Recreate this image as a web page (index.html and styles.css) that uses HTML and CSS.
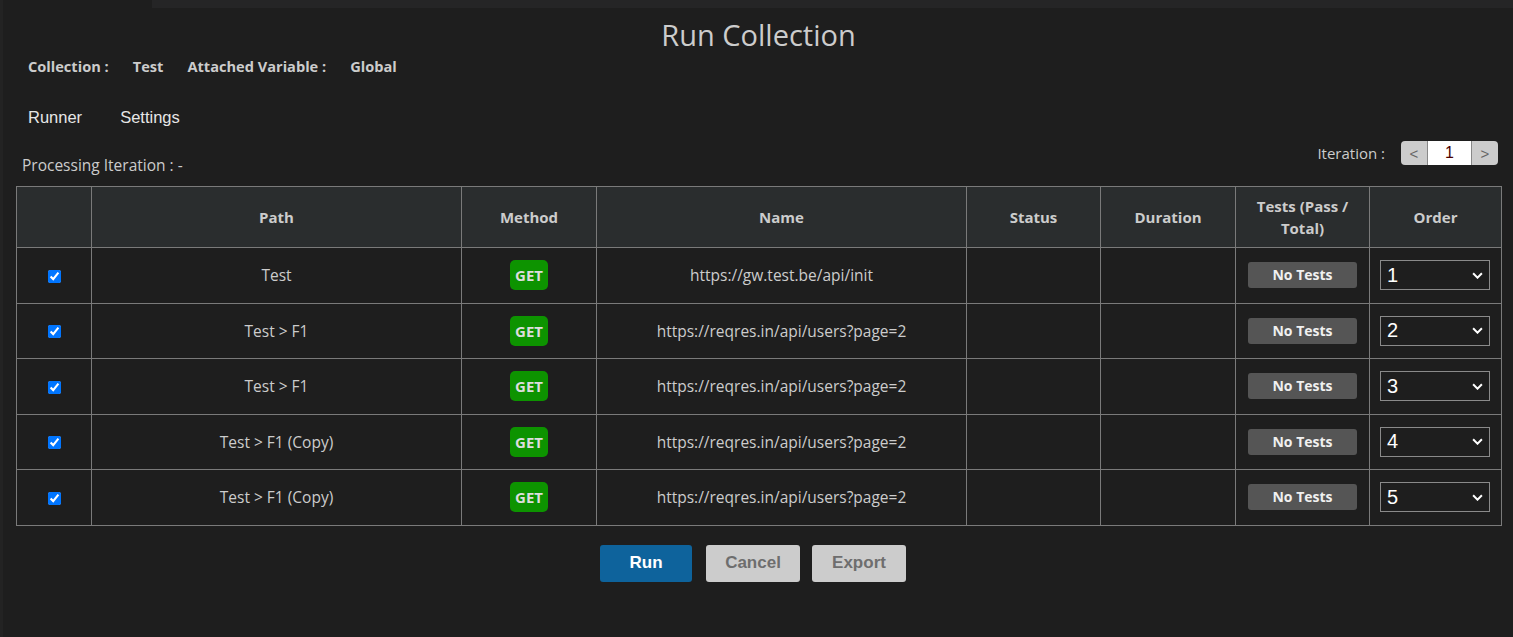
FILE: index.html
```html
<!DOCTYPE html>
<html>
<head>
<meta charset="utf-8">
<link rel="stylesheet" href="styles.css">
</head>
<body>
<div class="topbar"></div>
<div class="edge"></div>
<main class="page">
  <h1 class="title">Run Collection</h1>
  <div class="info">
    <span class="info-label">Collection :</span>
    <span class="info-value">Test</span>
    <span class="info-label">Attached Variable :</span>
    <span class="info-value">Global</span>
  </div>
  <nav class="tabs">
    <span class="tab">Runner</span>
    <span class="tab">Settings</span>
  </nav>
  <div class="status-row">
    <div class="processing">Processing Iteration : -</div>
    <div class="iteration">
      <span class="iteration-label">Iteration :</span>
      <div class="stepper">
        <button class="step">&lt;</button>
        <span class="step-value">1</span>
        <button class="step">&gt;</button>
      </div>
    </div>
  </div>
  <table class="runs">
    <colgroup>
      <col class="c-check"><col class="c-path"><col class="c-method"><col class="c-name">
      <col class="c-status"><col class="c-duration"><col class="c-tests"><col class="c-order">
    </colgroup>
    <thead>
      <tr>
        <th></th><th>Path</th><th>Method</th><th>Name</th><th>Status</th><th>Duration</th><th>Tests (Pass /<br>Total)</th><th>Order</th>
      </tr>
    </thead>
    <tbody>
      <tr>
        <td><input type="checkbox" checked></td><td>Test</td><td><span class="get">GET</span></td><td>https://gw.test.be/api/init</td><td></td><td></td><td><span class="notests">No Tests</span></td>
        <td><div class="order"><span>1</span><svg viewBox="0 0 10 6" width="11" height="7"><path d="M1 1l4 4 4-4" fill="none" stroke="#fff" stroke-width="1.8"/></svg></div></td>
      </tr>
      <tr>
        <td><input type="checkbox" checked></td><td>Test &gt; F1</td><td><span class="get">GET</span></td><td>https://reqres.in/api/users?page=2</td><td></td><td></td><td><span class="notests">No Tests</span></td>
        <td><div class="order"><span>2</span><svg viewBox="0 0 10 6" width="11" height="7"><path d="M1 1l4 4 4-4" fill="none" stroke="#fff" stroke-width="1.8"/></svg></div></td>
      </tr>
      <tr>
        <td><input type="checkbox" checked></td><td>Test &gt; F1</td><td><span class="get">GET</span></td><td>https://reqres.in/api/users?page=2</td><td></td><td></td><td><span class="notests">No Tests</span></td>
        <td><div class="order"><span>3</span><svg viewBox="0 0 10 6" width="11" height="7"><path d="M1 1l4 4 4-4" fill="none" stroke="#fff" stroke-width="1.8"/></svg></div></td>
      </tr>
      <tr>
        <td><input type="checkbox" checked></td><td>Test &gt; F1 (Copy)</td><td><span class="get">GET</span></td><td>https://reqres.in/api/users?page=2</td><td></td><td></td><td><span class="notests">No Tests</span></td>
        <td><div class="order"><span>4</span><svg viewBox="0 0 10 6" width="11" height="7"><path d="M1 1l4 4 4-4" fill="none" stroke="#fff" stroke-width="1.8"/></svg></div></td>
      </tr>
      <tr>
        <td><input type="checkbox" checked></td><td>Test &gt; F1 (Copy)</td><td><span class="get">GET</span></td><td>https://reqres.in/api/users?page=2</td><td></td><td></td><td><span class="notests">No Tests</span></td>
        <td><div class="order"><span>5</span><svg viewBox="0 0 10 6" width="11" height="7"><path d="M1 1l4 4 4-4" fill="none" stroke="#fff" stroke-width="1.8"/></svg></div></td>
      </tr>
    </tbody>
  </table>
  <div class="actions">
    <button class="btn btn-run">Run</button>
    <button class="btn btn-grey">Cancel</button>
    <button class="btn btn-grey btn-export">Export</button>
  </div>
</main>
</body>
</html>
```
FILE: styles.css
```css
html, body {
  margin: 0;
  padding: 0;
  background: #1e1e1e;
  height: 100%;
}
body {
  font-family: "Open Sans", "Noto Sans", sans-serif;
  color: #cccccc;
  position: relative;
  overflow: hidden;
}
.topbar {
  height: 8px;
  margin-left: 152px;
  background: #252526;
}
.edge {
  position: absolute;
  left: 0;
  top: 0;
  bottom: 0;
  width: 3px;
  background: #232323;
}
.page {
  padding: 0 12px 0 16px;
}
.title {
  margin: 8px 0 0;
  font-size: 29px;
  font-weight: 400;
  line-height: 38px;
  text-align: center;
  color: #cccccc;
}
.info {
  display: flex;
  gap: 24px;
  padding-left: 12px;
  margin-top: 1px;
  font-size: 14.6px;
  font-weight: 700;
  line-height: 22px;
  color: #cccccc;
}
.tabs {
  display: flex;
  gap: 38px;
  padding-left: 12px;
  margin-top: 29px;
  font-family: "Liberation Sans", Arial, sans-serif;
  font-size: 16.5px;
  line-height: 22px;
  color: #e6e6e6;
}
.status-row {
  display: flex;
  justify-content: space-between;
  align-items: flex-start;
  margin-top: 13px;
  height: 45px;
}
.processing {
  padding-left: 6px;
  margin-top: 14px;
  font-size: 15.5px;
  line-height: 20px;
  color: #cccccc;
}
.iteration {
  display: flex;
  align-items: center;
  gap: 16px;
  margin-right: 3px;
  font-size: 15px;
  color: #cccccc;
}
.stepper {
  display: flex;
  height: 24px;
  border-radius: 4px;
  overflow: hidden;
}
.step {
  width: 26px;
  height: 24px;
  border: none;
  padding: 0;
  background: #cccccc;
  color: #666666;
  font-family: "Liberation Sans", Arial, sans-serif;
  font-size: 15px;
}
.step-value {
  width: 43px;
  border-left: 1px solid #888;
  border-right: 1px solid #888;
  background: #ffffff;
  color: #4a0000;
  text-align: center;
  font-family: "Liberation Sans", Arial, sans-serif;
  font-size: 16px;
  line-height: 24px;
}
.runs {
  width: 1485px;
  border-collapse: collapse;
  table-layout: fixed;
  font-size: 15.5px;
  color: #cccccc;
}
.c-check { width: 75px; }
.c-path { width: 370px; }
.c-method { width: 135px; }
.c-name { width: 370px; }
.c-status { width: 134px; }
.c-duration { width: 135px; }
.c-tests { width: 134px; }
.c-order { width: 132px; }
.runs th, .runs td {
  border: 1px solid #7a7a7a;
  text-align: center;
  padding: 0;
}
.runs th {
  background: #2a2d2e;
  height: 60px;
  font-size: 15px;
  font-weight: 700;
  line-height: 22px;
}
.runs td {
  height: 54.5px;
}
.runs input[type="checkbox"] {
  width: 13px;
  height: 13px;
  margin: 0 0 2px;
  accent-color: #0075ff;
  vertical-align: middle;
}
.get {
  display: inline-block;
  width: 38px;
  height: 30px;
  line-height: 30px;
  border-radius: 5px;
  background: #0d9300;
  color: #dddddd;
  font-weight: 700;
  font-size: 15px;
}
.notests {
  display: inline-block;
  width: 109px;
  height: 26px;
  line-height: 26px;
  border-radius: 3px;
  background: #555555;
  color: #f0f0f0;
  font-weight: 700;
  font-size: 14px;
}
.order {
  display: flex;
  align-items: center;
  justify-content: space-between;
  width: 110px;
  height: 30px;
  margin-left: 10px;
  padding: 0 6px;
  box-sizing: border-box;
  border: 1px solid #8a8a8a;
  font-family: "Liberation Sans", Arial, sans-serif;
  font-size: 20px;
  color: #ffffff;
}
.actions {
  display: flex;
  justify-content: center;
  gap: 14px;
  margin-top: 19px;
  padding-right: 11px;
}
.btn {
  height: 37px;
  border: none;
  border-radius: 3px;
  font-family: "Liberation Sans", Arial, sans-serif;
  font-size: 17px;
  font-weight: 700;
}
.btn-run {
  width: 92px;
  background: #0e639c;
  color: #ffffff;
}
.btn-grey {
  width: 94px;
  background: #cccccc;
  color: #6e6e6e;
}
.btn-export {
  margin-left: -2px;
}
```
